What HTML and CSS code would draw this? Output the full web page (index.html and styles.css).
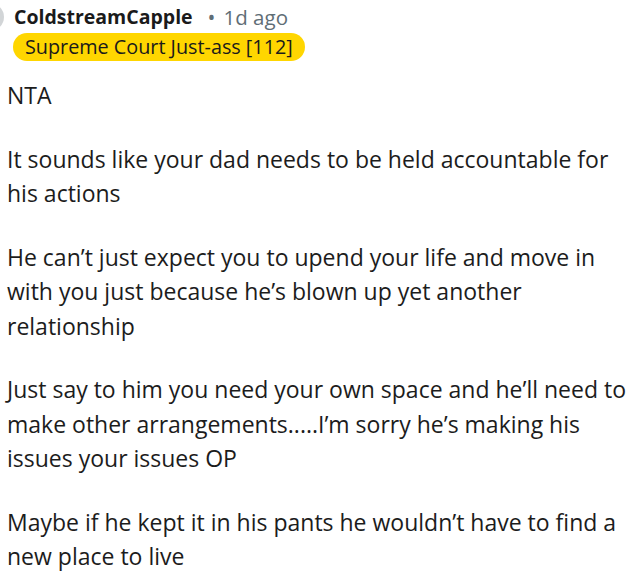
FILE: index.html
```
<!DOCTYPE html>
<html lang="en">
<head>
<meta charset="utf-8">
<title>Comment</title>
<link rel="stylesheet" href="styles.css">
</head>
<body>
<article class="comment">
  <header class="comment-head">
    <div class="author-row">
      <span class="avatar" aria-hidden="true"></span>
      <span class="author">ColdstreamCapple</span>
      <span class="meta"><span class="dot">•</span>1d ago</span>
    </div>
    <span class="flair">Supreme Court Just-ass [112]</span>
  </header>
  <div class="comment-body">
    <p>NTA</p>
    <p>It sounds like your dad needs to be held accountable for<br>his actions</p>
    <p>He can’t just expect you to upend your life and move in<br>with you just because he’s blown up yet another<br>relationship</p>
    <p>Just say to him you need your own space and he’ll need to<br>make other arrangements.....I’m sorry he’s making his<br>issues your issues OP</p>
    <p>Maybe if he kept it in his pants he wouldn’t have to find a<br>new place to live</p>
  </div>
</article>
</body>
</html>
```
FILE: styles.css
```
html, body {
  margin: 0;
  padding: 0;
  background: #ffffff;
}

body {
  font-family: "Open Sans", "Noto Sans", sans-serif;
  color: #1c1c1c;
  overflow: hidden;
}

.comment {
  display: flex;
  flex-direction: column;
}

.comment-head {
  display: flex;
  flex-direction: column;
  align-items: flex-start;
  padding: 4px 0 0 14px;
}

.author-row {
  display: flex;
  align-items: center;
  height: 26px;
}

.avatar {
  width: 28px;
  height: 28px;
  margin-left: -38px;
  margin-right: 10px;
  border-radius: 50%;
  background: #d2d5d7;
  flex: none;
}

.author {
  font-weight: 700;
  font-size: 19.5px;
  line-height: 26px;
  color: #1a1a1b;
}

.meta {
  font-size: 20.5px;
  line-height: 26px;
  color: #5f6e76;
  margin-left: 15px;
}

.dot {
  font-size: 21px;
  margin-right: 8px;
}

.flair {
  margin: 3px 0 0 -1px;
  padding: 0 12px;
  height: 28px;
  line-height: 28px;
  font-size: 19.8px;
  background: #ffd600;
  border-radius: 14px;
  color: #1a1a1b;
}

.comment-body {
  padding: 17px 0 0 7px;
  font-size: 23px;
  line-height: 34.5px;
}

.comment-body p {
  margin: 0 0 29px;
  white-space: nowrap;
}
```
